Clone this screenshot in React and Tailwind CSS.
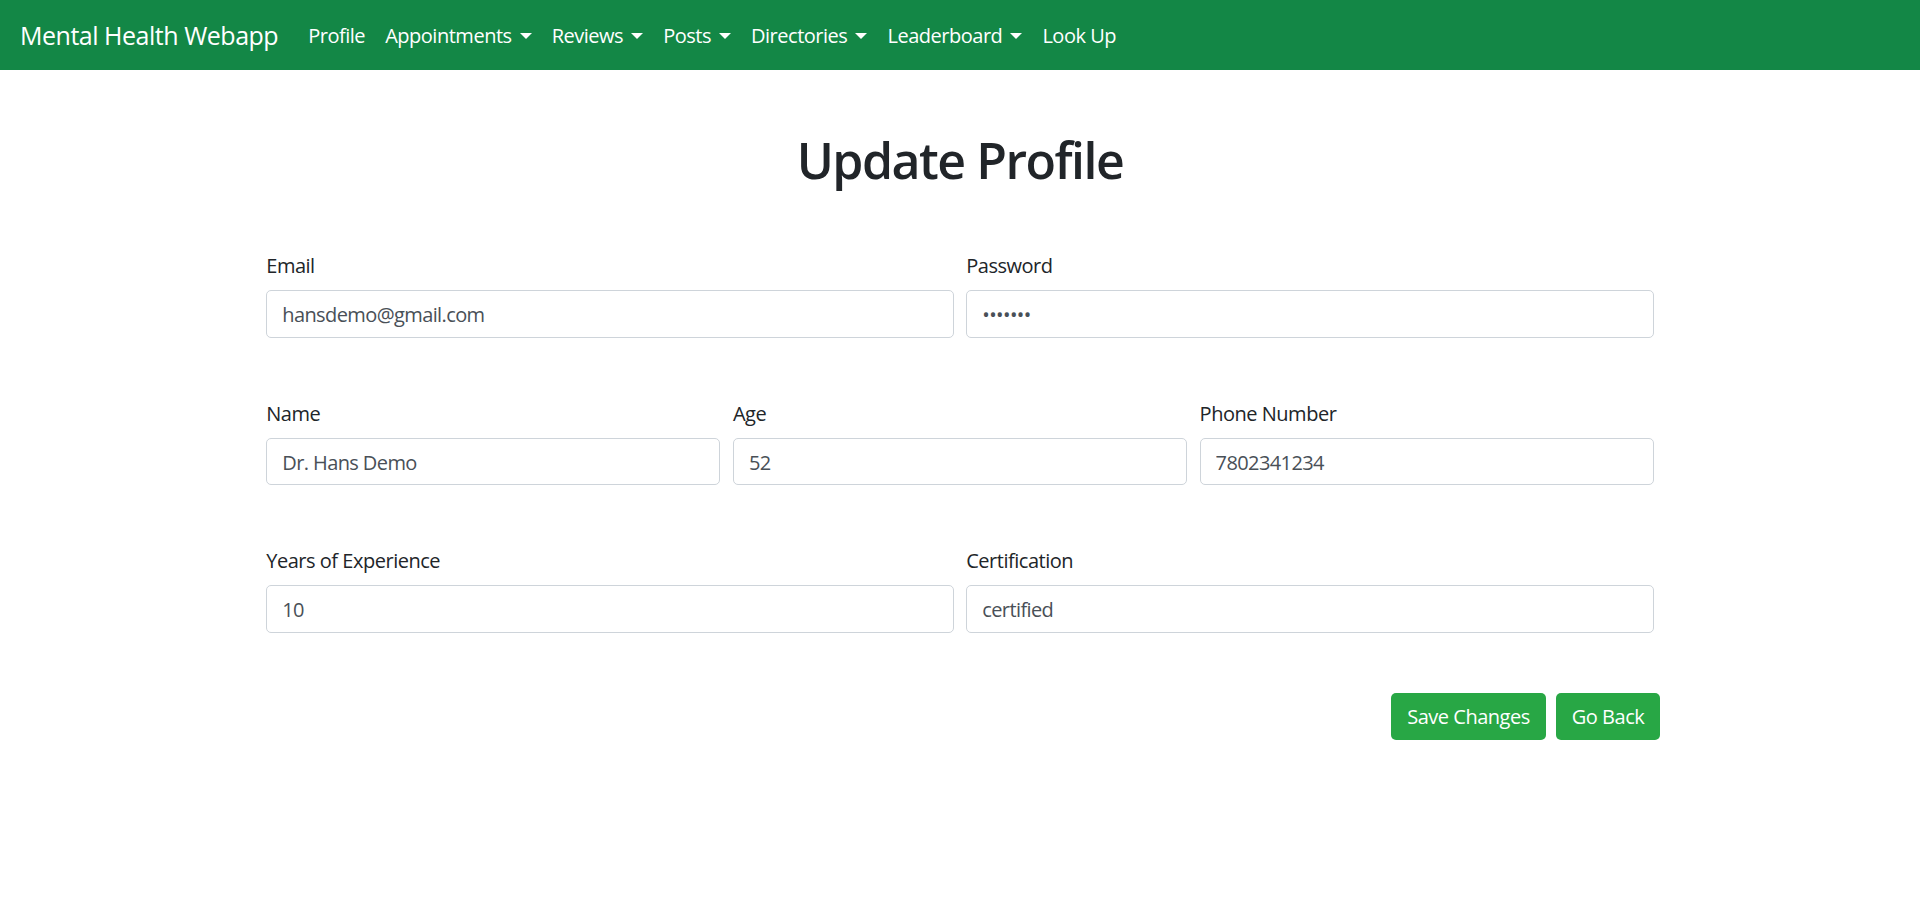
import React from "react";

const font = { fontFamily: '"Open Sans", "Liberation Sans", sans-serif' };

const NavLink = ({ label, dropdown }) => (
  <a href="#" className="flex items-center px-[10px] pt-[11px] pb-[9px] text-[20px] leading-[30px] text-white">
    {label}
    {dropdown && (
      <span className="ml-[8px] inline-block h-0 w-0 border-x-[6px] border-t-[6px] border-x-transparent border-t-white" />
    )}
  </a>
);

const Field = ({ label, value, type = "text" }) => (
  <div className="flex-1 px-[6.25px]">
    <label className="mb-[9px] block pt-[1px] text-[20px] leading-[30px] text-[#212529]">{label}</label>
    <input
      type={type}
      value={value}
      readOnly
      className="block h-[47.5px] w-full rounded-[5px] border border-[#ced4da] bg-white px-[15px] pt-[2px] text-[20px] tracking-[-0.03em] text-[#495057] outline-none"
    />
  </div>
);

export default function App() {
  return (
    <div className="min-h-screen bg-white tracking-[-0.03em]" style={font}>
      <nav className="flex h-[70px] items-center bg-[#138746] px-[20px]">
        <a href="#" className="mr-[20px] pt-[2px] text-[25px] leading-[37.5px] text-white">
          Mental Health Webapp
        </a>
        <div className="flex items-center">
          <NavLink label="Profile" />
          <NavLink label="Appointments" dropdown />
          <NavLink label="Reviews" dropdown />
          <NavLink label="Posts" dropdown />
          <NavLink label="Directories" dropdown />
          <NavLink label="Leaderboard" dropdown />
          <NavLink label="Look Up" />
        </div>
      </nav>

      <div className="mx-auto w-[1425px] px-[18.75px]">
        <h1 className="my-[60px] text-center text-[50px] font-semibold leading-[60px] tracking-[-0.03em] text-[#212529]">
          Update Profile
        </h1>

        <form>
          <div className="-mx-[6.25px] mb-[60px] flex">
            <Field label="Email" value="hansdemo@gmail.com" />
            <Field label="Password" value="1234567" type="password" />
          </div>
          <div className="-mx-[6.25px] mb-[60px] flex">
            <Field label="Name" value="Dr. Hans Demo" />
            <Field label="Age" value="52" />
            <Field label="Phone Number" value="7802341234" />
          </div>
          <div className="-mx-[6.25px] mb-[60px] flex">
            <Field label="Years of Experience" value="10" />
            <Field label="Certification" value="certified" />
          </div>
          <div className="-mr-[6.25px] flex justify-end gap-[10px]">
            <button type="button" className="h-[47.5px] w-[155px] rounded-[5px] bg-[#28a745] pt-[1px] text-[20px] text-white">
              Save Changes
            </button>
            <button type="button" className="h-[47.5px] w-[104px] rounded-[5px] bg-[#28a745] pt-[1px] text-[20px] text-white">
              Go Back
            </button>
          </div>
        </form>
      </div>
    </div>
  );
}
